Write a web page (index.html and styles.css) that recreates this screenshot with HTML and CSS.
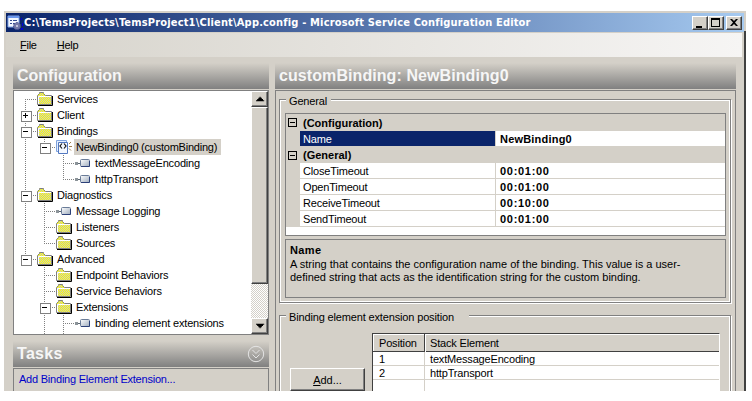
FILE: index.html
```
<!DOCTYPE html>
<html lang="en">
<head>
<meta charset="utf-8">
<title>Microsoft Service Configuration Editor</title>
<link rel="stylesheet" href="styles.css">
</head>
<body>
<svg width="0" height="0" class="defs" aria-hidden="true">
  <defs>
    <pattern id="dither" width="2" height="2" patternUnits="userSpaceOnUse">
      <rect width="2" height="2" fill="#c6c6c6"/><rect width="1" height="1" fill="#ffff00"/><rect x="1" y="1" width="1" height="1" fill="#ffff00"/>
    </pattern>
    <linearGradient id="pill" x1="0" y1="0" x2="1" y2="1"><stop offset="0" stop-color="#fff"/><stop offset="1" stop-color="#9eacbe"/></linearGradient>
    <symbol id="folder" viewBox="0 0 16 14">
      <path d="M0.5 12.5V3.500L2.500 1.500V0.500H6.500V1.500L8.500 3.500H14.500V12.500z" fill="url(#dither)" stroke="#808080"/>
      <path d="M1.500 12V4.500H14" fill="none" stroke="#fff"/>
      <path d="M1 13.500H15.500V4" fill="none" stroke="#000"/>
    </symbol>
    <symbol id="leaf" viewBox="0 0 16 14">
      <path d="M0 6h3v3H0z" fill="#8c9499"/><path d="M3 7h2v1H3z" fill="#5a6672"/>
      <rect x="5.500" y="3.500" width="9" height="7" rx="1" fill="url(#pill)" stroke="#6a7c98"/>
      <path d="M6 10.500h8.500V5" fill="none" stroke="#2c4078"/>
    </symbol>
    <symbol id="binding" viewBox="0 0 16 14">
      <path d="M.5.5h10v11H.5z" fill="#e4efff" stroke="#7fa2dc"/>
      <path d="M2.500 2.500h9v11h-9z" fill="#f4f8ff" stroke="#5278c0"/>
      <path d="M6 3.500L4 6l2 2.500M8 3.500L10 6 8 8.500" fill="none" stroke="#111" stroke-width="1.200"/>
      <path d="M13 4l2-2M13 6.500h3M13 8.500l2 2" stroke="#a08050"/>
    </symbol>
  </defs>
</svg>
<div class="window">
  <header class="titlebar">
    <svg class="appicon" viewBox="0 0 16 16"><path d="M1 1h11v11H1z" fill="#f4f8ff" stroke="#86a8e8"/><path d="M1 1h11v2H1z" fill="#6d98ec"/><path d="M3 5h2v1H3zM6 5h4v1H6zM3 8h2v1H3zM6 8h3v1H6z" fill="#334a90"/><circle cx="10" cy="11" r="3.500" fill="#7479a8" stroke="#4a5090" stroke-dasharray="2 1"/><circle cx="10" cy="11" r="1" fill="#dde"/><path d="M14 3h1v2h-1zM15 8h1v3h-1zM14 13h2v2h-2z" fill="#0000e0"/></svg>
    <h1>C:\TemsProjects\TemsProject1\Client\App.config - Microsoft Service Configuration Editor</h1>
    <div class="controls">
      <button><svg viewBox="0 0 14 12"><path d="M3 9h6v2H3z"/></svg></button>
      <button><svg viewBox="0 0 14 12"><path d="M2 1h9v9H2zM3 3v6h7V3z" fill-rule="evenodd"/></svg></button>
      <button class="close"><svg viewBox="0 0 14 12"><path d="M3 2h2l2 2 2-2h2L8 5.500 11 9H9L7 7 5 9H3l3-3.500z"/></svg></button>
    </div>
  </header>
  <nav class="menu"><span><u>F</u>ile</span><span><u>H</u>elp</span></nav>
  <main>
    <section class="left">
      <h2>Configuration</h2>
      <div class="tree">
        <ul>
          <li class="l0 first"><i></i><svg><use href="#folder"/></svg><span>Services</span></li>
          <li class="l0"><i class="box plus"></i><svg><use href="#folder"/></svg><span>Client</span></li>
          <li class="l0"><i class="box"></i><svg><use href="#folder"/></svg><span>Bindings</span></li>
          <li class="l1 end"><b></b><i class="box"></i><svg><use href="#binding"/></svg><span class="sel">NewBinding0 (customBinding)</span></li>
          <li class="l2"><b></b><b class="none"></b><i></i><svg><use href="#leaf"/></svg><span>textMessageEncoding</span></li>
          <li class="l2 end"><b></b><b class="none"></b><i></i><svg><use href="#leaf"/></svg><span>httpTransport</span></li>
          <li class="l0"><i class="box"></i><svg><use href="#folder"/></svg><span>Diagnostics</span></li>
          <li class="l1"><b></b><i></i><svg><use href="#leaf"/></svg><span>Message Logging</span></li>
          <li class="l1"><b></b><i></i><svg><use href="#folder"/></svg><span>Listeners</span></li>
          <li class="l1 end"><b></b><i></i><svg><use href="#folder"/></svg><span>Sources</span></li>
          <li class="l0 end"><i class="box"></i><svg><use href="#folder"/></svg><span>Advanced</span></li>
          <li class="l1"><b class="none"></b><i></i><svg><use href="#folder"/></svg><span>Endpoint Behaviors</span></li>
          <li class="l1"><b class="none"></b><i></i><svg><use href="#folder"/></svg><span>Service Behaviors</span></li>
          <li class="l1"><b class="none"></b><i class="box"></i><svg><use href="#folder"/></svg><span>Extensions</span></li>
          <li class="l2"><b class="none"></b><b></b><i></i><svg><use href="#leaf"/></svg><span>binding element extensions</span></li>
          <li class="tail"><b class="none"></b><b></b><b></b></li>
        </ul>
        <div class="scroll">
          <button><svg viewBox="0 0 12 12"><path d="M6 4h1v1h1v1h1v1h1v1H3V7h1V6h1V5h1z"/></svg></button>
          <div class="thumb"></div>
          <div class="track"></div>
          <button><svg viewBox="0 0 12 12"><path d="M3 4h7v1H9v1H8v1H7v1H6V7H5V6H4V5H3z"/></svg></button>
        </div>
      </div>
      <h2 class="h-tasks"><span>Tasks</span><svg viewBox="0 0 18 18"><circle cx="9" cy="9" r="7.700" fill="none"/><path d="M5.500 5l3.500 3.500L12.500 5M5.500 9.500L9 13l3.500-3.500" fill="none"/></svg></h2>
      <div class="tasks"><a>Add Binding Element Extension...</a></div>
    </section>
    <section class="right">
      <h2 class="h-right">customBinding: NewBinding0</h2>
      <div class="panel">
        <fieldset class="general"><legend>General</legend>
          <div class="props">
            <div class="cat"><i class="pm"></i><span>(Configuration)</span></div>
            <div class="row active"><span>Name</span><b>NewBinding0</b></div>
            <div class="cat sub"><i class="pm"></i><span>(General)</span></div>
            <div class="row"><span>CloseTimeout</span><b class="time">00:01:00</b></div>
            <div class="row"><span>OpenTimeout</span><b class="time">00:01:00</b></div>
            <div class="row"><span>ReceiveTimeout</span><b class="time">00:10:00</b></div>
            <div class="row"><span>SendTimeout</span><b class="time">00:01:00</b></div>
          </div>
          <div class="desc"><strong>Name</strong><p>A string that contains the configuration name of the binding. This value is a user-</p><p class="second">defined string that acts as the identification string for the custom binding.</p></div>
        </fieldset>
        <fieldset class="position"><legend>Binding element extension position</legend>
          <button class="add"><u>A</u>dd...</button>
          <div class="table">
            <div class="tr th"><span>Position</span><span>Stack Element</span></div>
            <div class="tr"><span>1</span><span>textMessageEncoding</span></div>
            <div class="tr"><span>2</span><span>httpTransport</span></div>
            <div class="tr"><span></span><span></span></div>
          </div>
        </fieldset>
      </div>
    </section>
  </main>
</div>
</body>
</html>
```
FILE: styles.css
```
* { box-sizing: border-box; }
body { margin: 0; width: 752px; height: 401px; overflow: hidden; background: #fff; font: 11px/16px "Liberation Sans", Arial, sans-serif; color: #000; }
.defs { position: absolute; }
h1, h2, p, ul { margin: 0; padding: 0; }
button { padding: 0; background: #d4d0c8; border: 1px solid; border-color: #fff #404040 #404040 #fff; box-shadow: inset -1px -1px #808080; font: inherit; color: inherit; }
button svg { display: block; width: 100%; height: 100%; }
svg { flex: none; }
.window { margin: 11px 0 0 4px; width: 742px; height: 380px; background: linear-gradient(#404040, #404040) 100% 20px / 2px 360px no-repeat #d4d0c8; overflow: hidden; padding: 2px 2px 0; }
.titlebar { display: flex; align-items: center; width: 738px; height: 19px; background: linear-gradient(90deg, #0a246a, #a6caf0); color: #fff; padding: 0 2px 0 1px; }
.appicon { width: 16px; height: 16px; }
.titlebar h1 { flex: 1; padding-left: 1px; font: bold 11px/18px "DejaVu Sans Condensed", "DejaVu Sans", sans-serif; letter-spacing: 0.17px; white-space: nowrap; }
.controls { display: flex; }
.controls button { width: 16px; height: 14px; }
.controls .close { margin-left: 2px; }
.menu { display: flex; gap: 20px; height: 25px; width: 736px; border-top: 1px solid #d4d0c8; padding: 4px 14px; letter-spacing: -0.25px; background: linear-gradient(90deg, #d6d3cb, #f6f5f4); }
main { display: flex; gap: 6px; padding: 6px 0 0 7px; }
.left { width: 256px; }
.right { width: 461px; }
h2 { display: flex; align-items: center; justify-content: space-between; height: 26px; padding: 0 4px; color: #f6f6f6; font: bold 16px/26px "Liberation Sans", Arial, sans-serif; white-space: nowrap; background: linear-gradient(#d4d0c8, #808080); }
.h-right { letter-spacing: 0.08px; }
.tree { display: flex; justify-content: space-between; margin-top: 1px; height: 245px; border: 1px solid #808080; background: #fff; overflow: hidden; }
ul { list-style: none; flex: 1; overflow: hidden; white-space: nowrap; letter-spacing: -0.17px; }
li { display: flex; height: 16px; padding-left: 2px; }
li > b, li > i { width: 19px; height: 16px; flex: none; position: relative; }
li > b { background: repeating-linear-gradient(#808080 0 1px, transparent 1px 2px) 9px 0 / 1px 16px no-repeat; }
li > b.none { background: none; }
li > i { width: 21px; background: repeating-linear-gradient(#808080 0 1px, transparent 1px 2px) 9px 0 / 1px 16px no-repeat, repeating-linear-gradient(90deg, #808080 0 1px, transparent 1px 2px) 9px 8px / 12px 1px no-repeat; }
li.first > i { background-size: 1px 8px, 12px 1px; background-position: 9px 8px, 9px 8px; }
li.end > i { background-size: 1px 8px, 12px 1px; }
.box::before { content: ""; position: absolute; left: 5px; top: 4px; width: 9px; height: 9px; border: 1px solid #808080; background: linear-gradient(#000, #000) 1px 3px / 5px 1px no-repeat, #fff; }
.box.plus::before { background: linear-gradient(#000, #000) 1px 3px / 5px 1px no-repeat, linear-gradient(#000, #000) 3px 1px / 1px 5px no-repeat, #fff; }
li > svg { width: 16px; height: 14px; margin-top: 1px; }
li > span { margin-left: 2px; padding: 0 2px; }
li > .sel { background: #d4d0c8; padding-right: 4px; letter-spacing: -0.23px; }
.scroll { width: 17px; display: flex; flex-direction: column; }
.scroll button { height: 16px; flex: none; }
.thumb { height: 177px; border: 1px solid; border-color: #fff #404040 #404040 #fff; box-shadow: inset -1px -1px #808080; background: #d4d0c8; }
.track { flex: 1; background: repeating-conic-gradient(#d4d0c8 0 25%, #fff 0 50%) 0 0 / 2px 2px; }
.h-tasks { margin-top: 6px; letter-spacing: 0.3px; }
.h-tasks svg { width: 18px; height: 18px; stroke: #e4e4e4; }
.tasks { margin-top: 1px; height: 40px; border: 1px solid #808080; padding: 2px 5px; color: #0000c8; letter-spacing: -0.22px; white-space: nowrap; }
.panel { margin-top: 1px; height: 320px; border: 1px solid #808080; padding: 8px 4px 0 3px; }
fieldset { position: relative; min-width: 0; margin: 0; padding: 0; border: 1px solid #808080; outline: 1px solid #fff; outline-offset: -2px; box-shadow: 1px 1px #fff; }
legend { position: absolute; left: 6px; top: -7px; padding: 0 4px 0 3px; background: #d4d0c8; white-space: nowrap; letter-spacing: -0.15px; }
.general { height: 204px; padding: 13px 4px 0 5px; }
.props { height: 123px; border: 1px solid #808080; background: linear-gradient(#d4d0c8, #d4d0c8) 0 0 / 14px 113px no-repeat #fff; }
.cat { display: flex; align-items: center; height: 17px; background: #d4d0c8; font-weight: bold; }
.cat.sub { height: 16px; }
.pm { width: 9px; height: 9px; margin: 0 6px 0 2px; border: 1px solid #000; background: linear-gradient(#000, #000) 1px 3px / 5px 1px no-repeat; }
.row { display: grid; grid-template-columns: 196px 1fr; height: 16px; margin-left: 14px; border-bottom: 1px solid #d4d0c8; line-height: 17px; }
.row span { height: 15px; padding-left: 3px; border-right: 1px solid #d4d0c8; letter-spacing: -0.17px; }
.row b { padding-left: 4px; letter-spacing: 0.2px; }
.row .time { letter-spacing: 0.7px; }
.active span { background: #0a246a; color: #fff; }
.desc { margin-top: 3px; height: 59px; border: 1px solid #808080; padding: 2px 4px; line-height: 13px; white-space: nowrap; }
.desc strong { display: block; line-height: 16px; letter-spacing: 0.4px; }
.second { letter-spacing: -0.02px; }
.position { display: flex; align-items: flex-start; height: 100px; margin-top: 12px; padding: 17px 9px 0 10px; }
.position legend { padding-right: 15px; }
.add { width: 75px; height: 23px; margin-top: 35px; }
.table { width: 348px; height: 100px; margin-left: 7px; border: 1px solid #404040; border-right-color: #fff; background: #fff; letter-spacing: -0.17px; }
.tr { display: grid; grid-template-columns: 52px 1fr; height: 14px; border-bottom: 1px solid #d4d0c8; line-height: 14px; }
.tr span { padding-left: 6px; border-right: 1px solid #d4d0c8; }
.tr span:last-child { padding-left: 5px; border: 0; }
.th { height: 18px; background: #d4d0c8; border-bottom: 1px solid #404040; line-height: 19px; box-shadow: inset 1px 1px #fff; }
.th span:first-child { border-right-color: #404040; box-shadow: 1px 0 #fff; }
```
